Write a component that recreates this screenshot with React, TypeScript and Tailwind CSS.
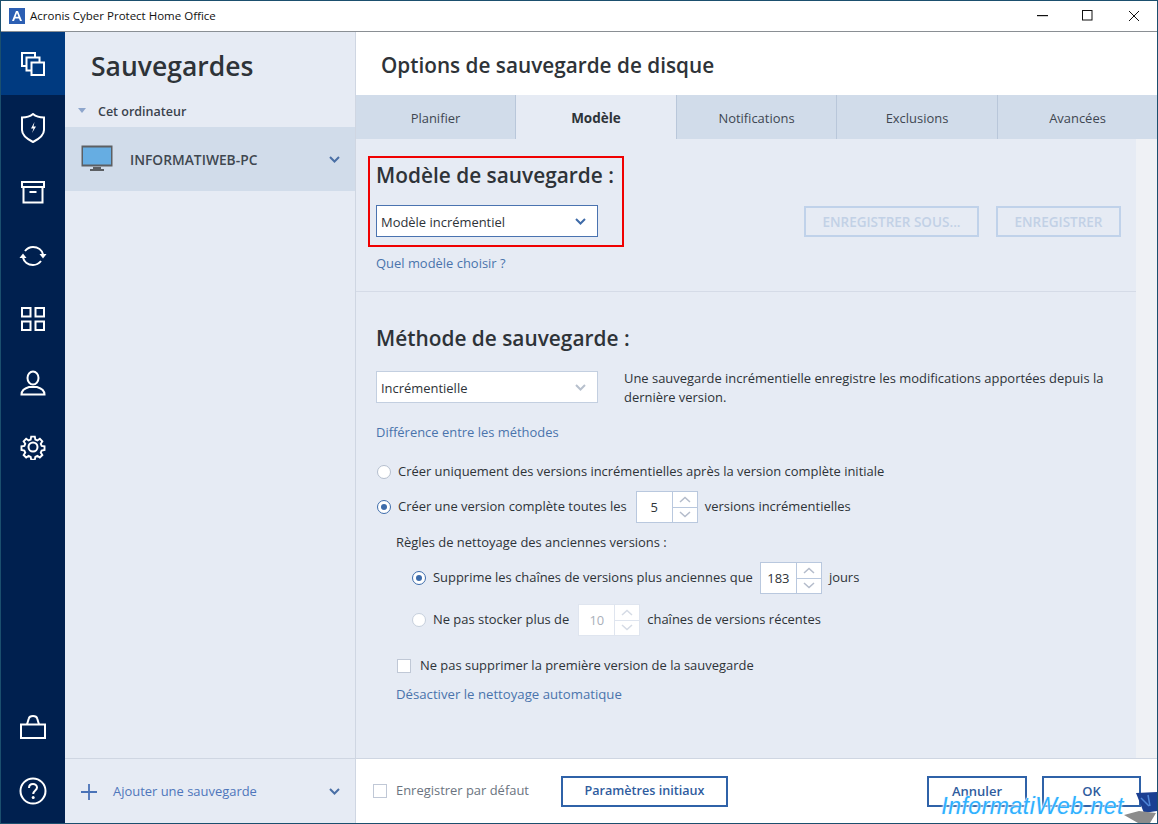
import React from "react";

const Chevron = ({ c = "#4a6fa5" }: { c?: string }) => (
  <svg width={11} height={7} viewBox="0 0 11 7" fill="none">
    <path d="M1 1l4.500 4.500L10 1" stroke={c} strokeWidth="2" />
  </svg>
);

const Spinner = ({ v, disabled }: { v: string; disabled?: boolean }) => {
  const b = disabled ? "border-[#dfe5ef]" : "border-[#b9c8de]";
  const a = disabled ? "#d5dbe5" : "#b4bccb";
  return (
    <div className={`flex h-[32px] w-[62px] border bg-white ${b}`}>
      <div className={`flex w-[36px] items-center justify-center border-r pt-[1px] ${b} ${disabled ? "text-[#aab0ba]" : "text-[#2e3338]"}`}>{v}</div>
      <div className="flex flex-1 flex-col">
        <div className={`flex flex-1 items-center justify-center border-b ${b}`}>
          <svg width="12" height="7" viewBox="0 0 12 7" fill="none"><path d="M1 6l5-4.500L11 6" stroke={a} strokeWidth="1.500" /></svg>
        </div>
        <div className="flex flex-1 items-center justify-center">
          <svg width="12" height="7" viewBox="0 0 12 7" fill="none"><path d="M1 1l5 4.500L11 1" stroke={a} strokeWidth="1.500" /></svg>
        </div>
      </div>
    </div>
  );
};

const Radio = ({ on, faded }: { on?: boolean; faded?: boolean }) => (
  <span className={`flex h-[14px] w-[14px] shrink-0 items-center justify-center rounded-full bg-white ${on ? "border-[1.5px] border-[#3d6cab]" : faded ? "border border-[#c6cfdc]" : "border border-[#b5bfce]"}`}>
    {on && <span className="h-[6px] w-[6px] rounded-full bg-[#3d6cab]" />}
  </span>
);

const NavIcon = ({ children, h = 64, active }: { children: React.ReactNode; h?: number; active?: boolean }) => (
  <div className={`flex w-full shrink-0 items-center justify-center ${active ? "bg-[#003a80]" : ""}`} style={{ height: h }}>
    {children}
  </div>
);

const Ic = ({ children, w = 28, h = 28 }: { children: React.ReactNode; w?: number; h?: number }) => (
  <svg width={w} height={h} viewBox={`0 0 ${w} ${h}`} fill="none" stroke="#fff" strokeWidth="2">
    {children}
  </svg>
);

const Tab = ({ label, active, w }: { label: string; active?: boolean; w: string }) => (
  <div className={`flex h-full items-center justify-center border-r border-[#b9c7da] pt-[3px] last:border-r-0 ${w} ${active ? "bg-[#e6ebf4] text-[13.500px] font-bold text-[#2e3338]" : "text-[#3f4752]"}`}>
    {label}
  </div>
);

export default function App() {
  return (
    <div className="relative flex h-[824px] w-[1158px] flex-col overflow-hidden border border-[#1b4f6e] bg-white text-[12.950px] text-[#2e3338]" style={{ fontFamily: '"Open Sans", sans-serif' }}>
      {/* title bar */}
      <div className="flex h-[31px] shrink-0 items-center border-b border-[#8a8f94] bg-white pb-[1px]">
        <svg width="16" height="16" viewBox="0 0 16 16" className="ml-[8px]">
          <rect width="16" height="16" fill="#2c5fb3" />
          <path d="M3 13 7 3h2l4 10h-2l-1-2.600H6L5 13zM6.600 8.800h2.800L8 5z" fill="#fff" />
        </svg>
        <span className="ml-[5px] text-[11.500px] text-[#111]">Acronis Cyber Protect Home Office</span>
        <div className="ml-auto flex items-center">
          <svg width="11" height="2" viewBox="0 0 11 2" className="mr-[34px]"><rect width="11" height="1.200" fill="#111" /></svg>
          <svg width="11" height="11" viewBox="0 0 11 11" className="mr-[35px]" fill="none"><rect x=".5" y=".5" width="9.500" height="9.500" stroke="#111" /></svg>
          <svg width="12" height="12" viewBox="0 0 12 12" className="mr-[17px]" fill="none"><path d="M1 1l10 10M11 1 1 11" stroke="#111" /></svg>
        </div>
      </div>

      <div className="flex min-h-0 flex-1">
        {/* nav rail */}
        <div className="flex w-[64px] shrink-0 flex-col items-center bg-[#00204f]">
          <NavIcon h={63} active>
            <Ic w={24} h={24}>
              <rect x="1" y="1" width="13" height="13" />
              <rect x="5.500" y="5.500" width="13" height="13" fill="#003a80" />
              <rect x="10.500" y="10.500" width="12.500" height="12.500" fill="#003a80" />
            </Ic>
          </NavIcon>
          <NavIcon h={65}>
            <Ic w={24} h={30}>
              <path d="M1 4.500C5 4.500 9 3.500 12 1c3 2.500 7 3.500 11 3.500V17c0 5-5 9-11 12C6 26 1 22 1 17z" />
              <path d="M13.500 9 10 15.500h2.500L11 20l4-6.500h-2.500z" fill="#fff" stroke="none" />
            </Ic>
          </NavIcon>
          <NavIcon h={64}>
            <Ic w={24} h={24}>
              <path d="M1 2h22v5H1z" />
              <path d="M2.500 7v15.500h19V7M8.500 12h7" />
            </Ic>
          </NavIcon>
          <NavIcon h={63}>
            <Ic w={28} h={20}>
              <path d="M6 5C8 2.500 11 1 14 1c5 0 9 3 10 7.500" />
              <path d="M22 15c-2 2.500-5 4-8 4-5 0-9-3-10-7.500" />
              <path d="M20.500 8h7l-3.500 4.500z" fill="#fff" stroke="none" />
              <path d="M.5 12h7L4 7.500z" fill="#fff" stroke="none" />
            </Ic>
          </NavIcon>
          <NavIcon h={64}>
            <Ic w={24} h={24}>
              <rect x="1" y="1" width="8.500" height="8.500" />
              <rect x="14.500" y="1" width="8.500" height="8.500" />
              <rect x="1" y="14.500" width="8.500" height="8.500" />
              <rect x="14.500" y="14.500" width="8.500" height="8.500" />
            </Ic>
          </NavIcon>
          <NavIcon h={64}>
            <Ic w={26} h={26}>
              <ellipse cx="13" cy="8" rx="5.500" ry="6.500" />
              <path d="M1.500 24.500c0-5 4-6.500 7.500-7.500h8c3.500 1 7.500 2.500 7.500 7.500z" />
            </Ic>
          </NavIcon>
          <NavIcon h={63}>
            <Ic w={26} h={26}>
              <circle cx="13" cy="13" r="4.500" />
              <path d="M11 1.500h4l.6 3.200 2.300 1 2.700-1.800 2.800 2.800-1.800 2.700 1 2.300 3.200.6v4l-3.200.6-1 2.300 1.800 2.700-2.800 2.800-2.700-1.800-2.300 1-.6 3.200h-4l-.6-3.200-2.300-1-2.700 1.800-2.800-2.800 1.800-2.700-1-2.300-3.200-.6v-4l3.200-.6 1-2.300-1.800-2.700 2.800-2.800 2.700 1.800 2.300-1z" transform="translate(1.300 1.300) scale(.9)" strokeWidth="2.100" />
            </Ic>
          </NavIcon>
          <div className="mt-auto flex h-[64px] items-center justify-center">
            <Ic w={26} h={24}>
              <path d="M1 9.500h24V23H1z" />
              <path d="M7 9.500 8.800 3.500C9.200 2 10.800 1 13 1s3.800 1 4.200 2.500L19 9.500" />
            </Ic>
          </div>
          <div className="flex h-[64px] items-center justify-center">
            <svg width="28" height="28" viewBox="0 0 28 28" fill="none">
              <circle cx="14" cy="14" r="12.500" stroke="#fff" strokeWidth="2" />
              <path d="M10 11c0-2.500 1.800-4 4-4s4 1.500 4 3.500c0 3-3.800 3-3.800 6.500" stroke="#fff" strokeWidth="2" />
              <circle cx="14.200" cy="20.500" r="1.500" fill="#fff" />
            </svg>
          </div>
        </div>

        {/* backups column */}
        <div className="flex w-[291px] shrink-0 flex-col border-r border-[#cfd6e2] bg-[#e6ebf4]">
          <div className="flex h-[63px] shrink-0 items-center pl-[26px] pt-[5px] text-[26.500px] font-semibold leading-none text-[#2e3338]">Sauvegardes</div>
          <div className="flex h-[32px] shrink-0 items-center pl-[13px] text-[12.500px] font-semibold text-[#3a424d]">
            <svg width="8" height="6" viewBox="0 0 8 6"><path d="M0 0h8L4 5z" fill="#8ea6cc" /></svg>
            <span className="ml-[12px] pt-[3px]">Cet ordinateur</span>
          </div>
          <div className="flex h-[64px] shrink-0 items-center bg-[#d1dcea] pl-[16px] pr-[15px]">
            <svg width="32" height="28" viewBox="0 0 32 28">
              <rect x=".5" y=".5" width="31" height="21" fill="#5c5f63" />
              <rect x="2" y="2.500" width="28" height="17" fill="#66ade2" />
              <rect x="12" y="22" width="8" height="2" fill="#5c5f63" />
              <rect x="9" y="24" width="14" height="2" fill="#5c5f63" />
            </svg>
            <span className="ml-[17px] pt-[2px] text-[13.800px] font-semibold text-[#3f4750]">INFORMATIWEB-PC</span>
            <span className="ml-auto flex"><Chevron /></span>
          </div>
          <div className="flex-1" />
          <div className="flex h-[65px] shrink-0 items-center border-t border-[#cfd6e2] pl-[16px] pr-[15px] pt-[1px] text-[#4e76bb]">
            <svg width="16" height="16" viewBox="0 0 16 16"><path d="M8 0v16M0 8h16" stroke="#4a73b8" strokeWidth="1.800" /></svg>
            <span className="ml-[16px]">Ajouter une sauvegarde</span>
            <span className="ml-auto flex"><Chevron /></span>
          </div>
        </div>

        {/* main pane */}
        <div className="flex min-w-0 flex-1 flex-col">
          <div className="flex h-[63px] shrink-0 items-center pl-[25px] pt-[5px] text-[20.750px] font-semibold text-[#2e3338]">Options de sauvegarde de disque</div>
          <div className="flex h-[44px] shrink-0 bg-[#d1dcea]">
            <Tab label="Planifier" w="w-[160px]" />
            <Tab label="Modèle" active w="w-[161px]" />
            <Tab label="Notifications" w="w-[160px]" />
            <Tab label="Exclusions" w="w-[161px]" />
            <Tab label="Avancées" w="flex-1" />
          </div>

          <div className="relative flex min-h-0 flex-1">
            {/* red annotation */}
            <div className="absolute left-[12px] top-[17px] h-[91px] w-[256px] border-2 border-[#f00000]" />

            <div className="flex min-w-0 flex-1 flex-col bg-[#e6ebf4]">
              <div className="flex h-[153px] shrink-0 flex-col border-b border-[#d5dbe7] pl-[20px] pr-[15px]">
                <h2 className="mt-[21px] text-[20.850px] font-semibold leading-[30px] text-[#2e3338]">Modèle de sauvegarde :</h2>
                <div className="mt-[15px] flex items-center justify-between">
                  <div className="flex h-[32px] w-[222px] items-center justify-between border border-[#4a73b0] bg-white pl-[4px] pr-[11px]">
                    <span className="pt-[3px]">Modèle incrémentiel</span>
                    <Chevron c="#3f6ba8" />
                  </div>
                  <div className="flex gap-[17px]">
                    <div className="flex h-[31px] w-[175px] items-center justify-center border-2 border-[#c0d2ea] pt-[2px] text-[13.500px] font-semibold text-[#c2d1e6]">ENREGISTRER SOUS...</div>
                    <div className="flex h-[31px] w-[125px] items-center justify-center border-2 border-[#c0d2ea] pt-[2px] text-[13.500px] font-semibold text-[#c2d1e6]">ENREGISTRER</div>
                  </div>
                </div>
                <a className="mt-[16px] leading-[20px] text-[#4a74ac]">Quel modèle choisir ?</a>
              </div>

              <div className="flex flex-col pl-[20px]">
                <h2 className="mt-[31px] text-[20.850px] font-semibold leading-[30px] text-[#2e3338]">Méthode de sauvegarde :</h2>
                <div className="mt-[18px] flex items-start">
                  <div className="flex h-[32px] w-[222px] items-center justify-between border border-[#c3cfe0] bg-white pl-[4px] pr-[11px]">
                    <span className="pt-[3px]">Incrémentielle</span>
                    <Chevron c="#b7c0cd" />
                  </div>
                  <p className="ml-[26px] mt-[-2px] w-[500px] leading-[19px]">Une sauvegarde incrémentielle enregistre les modifications apportées depuis la dernière version.</p>
                </div>
                <a className="mt-[15px] leading-[20px] text-[#4a74ac]">Différence entre les méthodes</a>
                <div className="ml-[1px] mt-[20px] flex h-[20px] items-center gap-[7px]"><Radio /><span>Créer uniquement des versions incrémentielles après la version complète initiale</span></div>
                <div className="ml-[1px] mt-[9px] flex h-[32px] items-center gap-[7px]">
                  <Radio on /><span>Créer une version complète toutes les</span>
                  <span className="ml-[2px]"><Spinner v="5" /></span>
                  <span>versions incrémentielles</span>
                </div>
                <div className="ml-[20px] mt-[9px] h-[20px] leading-[20px]">Règles de nettoyage des anciennes versions :</div>
                <div className="ml-[36px] mt-[10px] flex h-[32px] items-center gap-[7px]">
                  <Radio on /><span>Supprime les chaînes de versions plus anciennes que</span>
                  <span><Spinner v="183" /></span>
                  <span>jours</span>
                </div>
                <div className="ml-[36px] mt-[10px] flex h-[32px] items-center gap-[7px]">
                  <Radio faded /><span>Ne pas stocker plus de</span>
                  <span className="ml-[2px]"><Spinner v="10" disabled /></span>
                  <span>chaînes de versions récentes</span>
                </div>
                <div className="ml-[21px] mt-[20px] flex h-[20px] items-center gap-[9px]">
                  <span className="h-[14px] w-[14px] border border-[#c0c8d6] bg-white" />
                  <span>Ne pas supprimer la première version de la sauvegarde</span>
                </div>
                <a className="ml-[20px] mt-[8px] text-[13.200px] leading-[20px] text-[#4a74ac]">Désactiver le nettoyage automatique</a>
              </div>
            </div>
            <div className="w-[21px] shrink-0 bg-[#eff1f5]" />
          </div>

          {/* footer */}
          <div className="flex h-[65px] shrink-0 items-center border-t border-[#cfd6e2] bg-white pl-[17px] pr-[16px]">
            <span className="h-[14px] w-[14px] border border-[#c0c8d6] bg-white" />
            <span className="ml-[9px] text-[#6b7480]">Enregistrer par défaut</span>
            <button className="ml-[32px] flex h-[31px] w-[167px] items-center justify-center border-2 border-[#2f62a8] pt-[1px] text-[12.600px] font-semibold text-[#2f5c9e]">Paramètres initiaux</button>
            <button className="ml-auto flex h-[31px] w-[100px] items-center justify-center border-2 border-[#2f62a8] pt-[1px] text-[13px] font-semibold text-[#2f5c9e]">Annuler</button>
            <button className="ml-[15px] flex h-[31px] w-[99px] items-center justify-center border-2 border-[#2f62a8] pt-[1px] text-[13px] font-semibold text-[#2f5c9e]">OK</button>
          </div>
        </div>
      </div>

      {/* watermark */}
      <div className="absolute bottom-[5px] right-[33px] text-[23px] italic leading-[24px] tracking-[.5px] text-[#2fb1ff]" style={{ fontFamily: '"Liberation Sans", sans-serif', textShadow: "0 0 2px #fff, 0 0 3px #fff, 0 0 1px #7fd0ff" }}>InformatiWeb.net</div>
      <svg width="33" height="31" viewBox="0 0 33 31" className="absolute bottom-[0px] right-[0px]">
        <path d="M12 1 33 0v19l-13 2z" fill="#1b3f92" />
        <path d="M17 6l8 8M24 3l2 11" stroke="#4f86d8" strokeWidth="1.500" />
        <path d="M0 23l15-4 17 2-6 10H14z" fill="#8c8c8c" />
      </svg>
    </div>
  );
}
